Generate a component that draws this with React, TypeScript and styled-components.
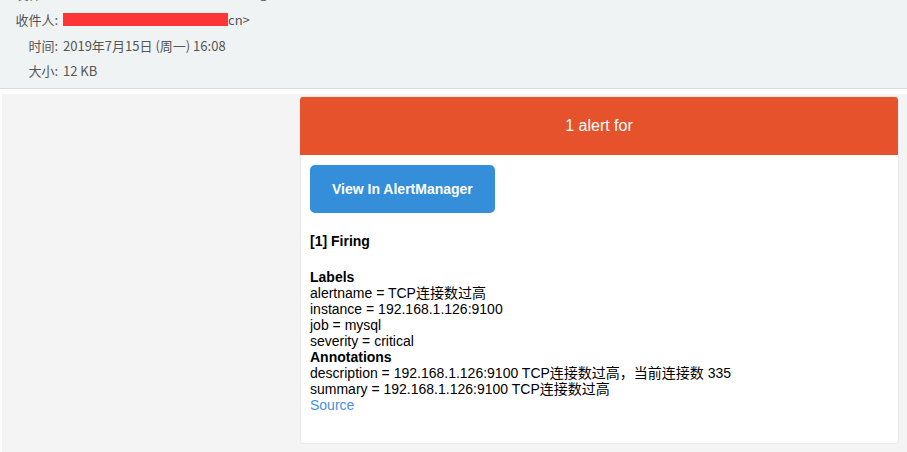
import React from "react";
import styled, { createGlobalStyle } from "styled-components";

const Global = createGlobalStyle`
  html, body { margin: 0; padding: 0; background: #ffffff; }
  body { width: 907px; height: 452px; overflow: hidden; }
`;

const Page = styled.div`
  display: flex;
  flex-direction: column;
  height: 452px;
  overflow: hidden;
`;

const MailHeader = styled.header`
  height: 88px;
  background: #eff3f3;
  border-bottom: 1px solid #d8dcdc;
  overflow: hidden;
  font-family: "Noto Sans CJK SC", "Liberation Sans", sans-serif;
  font-size: 13px;
  color: #555;
`;

const MetaGrid = styled.div`
  display: grid;
  grid-template-columns: 58px 1fr;
  grid-auto-rows: 25.7px;
  column-gap: 5px;
  margin-top: -19px;
`;

const MetaLabel = styled.div`
  text-align: right;
  align-self: center;
  white-space: nowrap;
`;

const MetaValue = styled.div`
  align-self: center;
  display: flex;
  align-items: center;
  white-space: nowrap;
`;

const Strong = styled.span`
  font-weight: bold;
  color: #333;
  margin-right: 10px;
  letter-spacing: 0.6px;
`;

const Addr = styled.span`
  letter-spacing: 0.6px;
`;

const Redacted = styled.span`
  display: inline-block;
  width: 165px;
  height: 13px;
  background: #fc3636;
`;

const Gap = styled.div`
  height: 5px;
  background: #ffffff;
`;

const BodyWrap = styled.main`
  flex: 1;
  margin-left: 2px;
  background: #f4f4f4;
  padding: 2px 9px 0 298px;
  font-family: "Liberation Sans", Arial, "Noto Sans CJK SC", sans-serif;
  font-size: 14px;
  color: #000;
`;

const Card = styled.div`
  width: 599px;
  box-sizing: border-box;
  background: #fff;
  border: 1px solid #e9e9e9;
  border-radius: 3px;
`;

const AlertHead = styled.div`
  background: #e6522c;
  color: #fff;
  font-size: 16px;
  line-height: 18px;
  padding: 20px;
  margin: 0 0 0 -1px;
  text-align: center;
  border-radius: 3px 3px 0 0;
`;

const ContentWrap = styled.div`
  padding: 10px 10px 10px 9px;
  line-height: 16px;
`;

const Block = styled.div`
  padding: 0 0 20px;
`;

const Button = styled.a`
  display: inline-block;
  color: #fff;
  text-decoration: none;
  font-weight: bold;
  line-height: 28px;
  text-align: center;
  background: #348eda;
  border: solid #348eda;
  border-width: 10px 21px;
  padding: 0 1px;
  border-radius: 5px;
  text-transform: capitalize;
`;

const Title = styled.strong`
  display: block;
  font-weight: bold;
`;

const Line = styled.div``;

const Link = styled.a`
  color: #4a8fe0;
  text-decoration: none;
`;

export default function App() {
  return (
    <Page>
      <Global />
      <MailHeader>
        <MetaGrid>
          <MetaLabel>发件人:</MetaLabel>
          <MetaValue>
            <Strong>20602220020</Strong>
            <Addr>&lt;20602220020@163.com&gt;</Addr>
          </MetaValue>
          <MetaLabel>收件人:</MetaLabel>
          <MetaValue>
            <Redacted />
            cn&gt;
          </MetaValue>
          <MetaLabel>时间:</MetaLabel>
          <MetaValue>2019年7月15日 (周一) 16:08</MetaValue>
          <MetaLabel>大小:</MetaLabel>
          <MetaValue>12 KB</MetaValue>
        </MetaGrid>
      </MailHeader>
      <Gap />
      <BodyWrap>
        <Card>
          <AlertHead>1 alert for</AlertHead>
          <ContentWrap>
            <Block>
              <Button href="#">View in AlertManager</Button>
            </Block>
            <Block>
              <Title>[1] Firing</Title>
            </Block>
            <Block>
              <Title>Labels</Title>
              <Line>alertname = TCP连接数过高</Line>
              <Line>instance = 192.168.1.126:9100</Line>
              <Line>job = mysql</Line>
              <Line>severity = critical</Line>
              <Title>Annotations</Title>
              <Line>description = 192.168.1.126:9100 TCP连接数过高，当前连接数 335</Line>
              <Line>summary = 192.168.1.126:9100 TCP连接数过高</Line>
              <Link href="#">Source</Link>
            </Block>
          </ContentWrap>
        </Card>
      </BodyWrap>
    </Page>
  );
}
